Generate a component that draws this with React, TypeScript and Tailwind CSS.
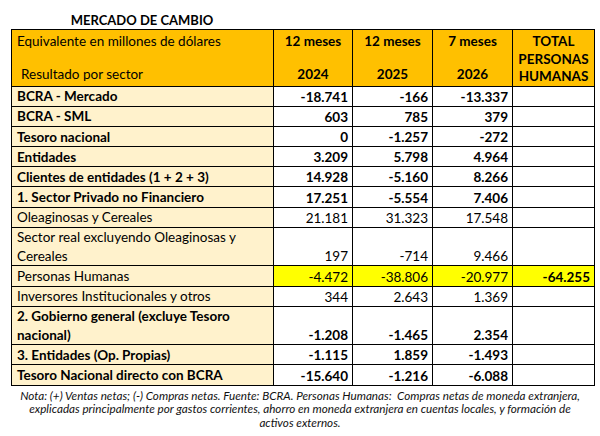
const rows = [
  { label: "BCRA - Mercado", values: ["-18.741", "-166", "-13.337"], bold: true },
  { label: "BCRA - SML", values: ["603", "785", "379"], bold: true },
  { label: "Tesoro nacional", values: ["0", "-1.257", "-272"], bold: true },
  { label: "Entidades", values: ["3.209", "5.798", "4.964"], bold: true },
  { label: "Clientes de entidades (1 + 2 + 3)", values: ["14.928", "-5.160", "8.266"], bold: true },
  { label: "1. Sector Privado no Financiero", values: ["17.251", "-5.554", "7.406"], bold: true },
  { label: "Oleaginosas y Cereales", values: ["21.181", "31.323", "17.548"] },
  { label: "Sector real excluyendo Oleaginosas y Cereales", values: ["197", "-714", "9.466"], tall: true },
  { label: "Personas Humanas", values: ["-4.472", "-38.806", "-20.977"], total: "-64.255", highlight: true },
  { label: "Inversores Institucionales y otros", values: ["344", "2.643", "1.369"] },
  { label: "2. Gobierno general (excluye Tesoro nacional)", values: ["-1.208", "-1.465", "2.354"], bold: true, tall: true },
  { label: "3. Entidades (Op. Propias)", values: ["-1.115", "1.859", "-1.493"], bold: true },
  { label: "Tesoro Nacional directo con BCRA", values: ["-15.640", "-1.216", "-6.088"], bold: true },
];

const periods = [
  ["12 meses", "2024"],
  ["12 meses", "2025"],
  ["7 meses", "2026"],
];

export default function App() {
  return (
    <div className="h-[436px] w-[600px] bg-white font-['Lato','Liberation_Sans',sans-serif] text-[13.5px] text-black">
      <div className="ml-[11px] flex h-[29px] w-[262px] items-end justify-center text-[13px] font-bold leading-[18px]">
        MERCADO DE CAMBIO
      </div>
      <table className="ml-[11px] w-[583px] table-fixed border-collapse">
        <colgroup>
          <col className="w-[262px]" />
          <col className="w-[79px]" />
          <col className="w-[80px]" />
          <col className="w-[80px]" />
          <col className="w-[82px]" />
        </colgroup>
        <thead>
          <tr className="h-[55px] bg-[#ffc000]">
            <th className="border border-black p-0 text-left align-top font-normal">
              <div className="flex h-[54px] flex-col justify-between leading-[17px]">
                <span className="pl-[5px] pt-[3px]">Equivalente en millones de dólares</span>
                <span className="pb-[1px] pl-[9px]">Resultado por sector</span>
              </div>
            </th>
            {periods.map(([p, y]) => (
              <th key={y} className="border border-black p-0 align-top font-bold">
                <div className="flex h-[54px] flex-col justify-between leading-[17px]">
                  <span className="pt-[3px]">{p}</span>
                  <span className="pb-[1px]">{y}</span>
                </div>
              </th>
            ))}
            <th className="border border-black p-0 align-top font-bold leading-[17.5px]">
              <div className="pt-[3px]">
                TOTAL
                <br />
                PERSONAS
                <br />
                HUMANAS
              </div>
            </th>
          </tr>
        </thead>
        <tbody>
          {rows.map((r) => (
            <tr key={r.label} className={r.tall ? "h-[38.5px]" : "h-[20.2px]"}>
              <td
                className={`border border-black bg-[#fff2cc] px-[5px] pb-0 pt-0 align-bottom leading-[18.5px] ${
                  r.bold ? "font-bold" : ""
                }`}
              >
                {r.label}
              </td>
              {r.values.map((v, i) => (
                <td
                  key={i}
                  className={`border border-black pb-0 pl-0 pr-[4px] pt-0 text-right align-bottom leading-[18px] ${
                    r.bold ? "font-bold" : ""
                  } ${r.highlight ? "bg-[#ffff00]" : "bg-white"}`}
                >
                  {v}
                </td>
              ))}
              <td
                className={`border border-black pb-0 pl-0 pr-[4px] pt-0 text-right align-bottom font-bold leading-[18px] ${
                  r.highlight ? "bg-[#ffff00]" : "bg-white"
                }`}
              >
                {r.total ?? ""}
              </td>
            </tr>
          ))}
        </tbody>
      </table>
      <p className="mt-[3px] text-center text-[11.7px] italic leading-[13.5px] text-[#111]">
        Nota: (+) Ventas netas; (-) Compras netas. Fuente: BCRA. Personas Humanas:&nbsp; Compras netas de moneda extranjera,
        <br />
        explicadas principalmente por gastos corrientes, ahorro en moneda extranjera en cuentas locales, y formación de
        <br />
        activos externos.
      </p>
    </div>
  );
}
